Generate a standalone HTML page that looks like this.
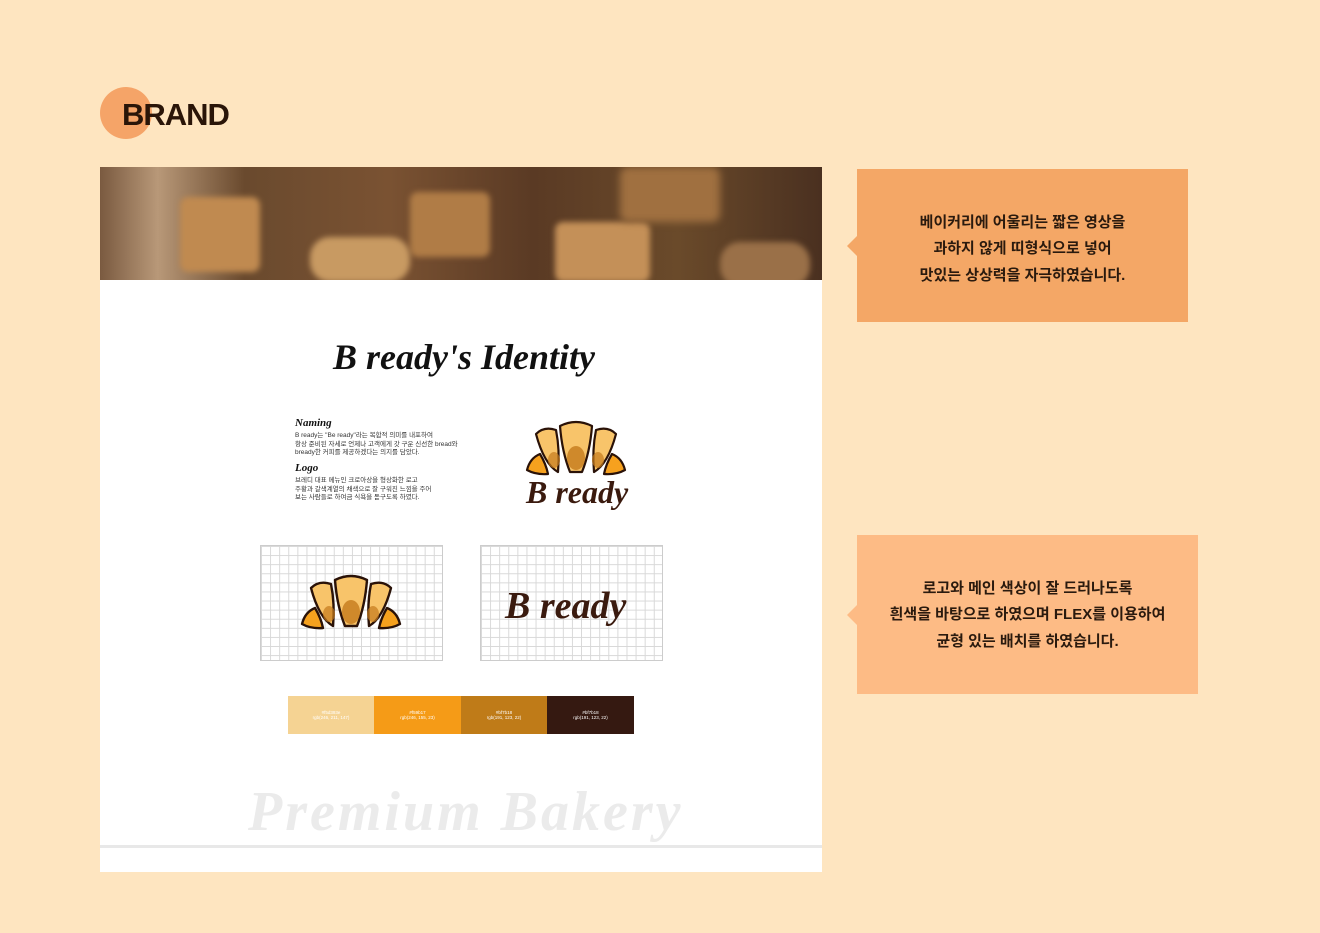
<!DOCTYPE html>
<html><head><meta charset="utf-8"><style>
body{margin:0;width:1320px;height:933px;background:#fee5c0;position:relative;overflow:hidden;font-family:"Liberation Sans","Noto Sans CJK KR",sans-serif}
.abs{position:absolute}
.script{font-family:"Liberation Serif",serif;font-style:italic;font-weight:bold}
.grid{background-color:#fff;background-image:linear-gradient(#d8d8d8 1px,transparent 1px),linear-gradient(90deg,#d8d8d8 1px,transparent 1px);background-size:9.1px 9.1px;border:1px solid #ccc}
.call{display:flex;align-items:center;justify-content:center;text-align:center;color:#2a1a0e;font-size:15px;line-height:26.5px;font-weight:bold;box-sizing:border-box}
.call:before{content:"";position:absolute;left:-10px;top:50%;margin-top:-10px;border:10px solid transparent;border-left:0;border-right-color:inherit}
</style></head><body>
<div class="abs" style="left:100px;top:87px;width:52px;height:52px;border-radius:50%;background:#f5a468"></div>
<div class="abs" style="left:122px;top:97px;font-size:31px;font-weight:bold;color:#2a1508;letter-spacing:-1px">BRAND</div>

<div class="abs" style="left:100px;top:167px;width:722px;height:705px;background:#fff"></div>
<div class="abs" style="left:100px;top:167px;width:722px;height:113px;overflow:hidden;background:linear-gradient(90deg,#7a5a40 0%,#b89878 8%,#6a4a2e 20%,#7a5232 40%,#5a3a24 60%,#6a4a2a 80%,#4a3020 100%)">
<div class="abs" style="left:80px;top:30px;width:80px;height:75px;background:#c08a50;border-radius:8px;filter:blur(3px)"></div>
<div class="abs" style="left:310px;top:25px;width:80px;height:65px;background:#b07c46;border-radius:8px;filter:blur(3px)"></div>
<div class="abs" style="left:455px;top:55px;width:95px;height:60px;background:#c49058;border-radius:8px;filter:blur(3px)"></div>
<div class="abs" style="left:210px;top:70px;width:100px;height:45px;background:#c89a62;border-radius:20px;filter:blur(3px)"></div>
<div class="abs" style="left:520px;top:0px;width:100px;height:55px;background:#a07040;border-radius:8px;filter:blur(4px)"></div>
<div class="abs" style="left:620px;top:75px;width:90px;height:45px;background:#9a7048;border-radius:20px;filter:blur(3px)"></div>
</div>

<div class="abs script" style="left:333px;top:336px;font-size:36px;color:#111">B ready's Identity</div>

<div class="abs script" style="left:295px;top:417px;font-size:11px;color:#111">Naming</div>
<div class="abs" style="left:295px;top:432px;font-size:6.5px;line-height:8.5px;color:#333">B ready는 "Be ready"라는 복합적 의미를 내포하여<br>항상 준비된 자세로 언제나 고객에게 갓 구운 신선한 bread와<br>bready한 커피를 제공하겠다는 의지를 담았다.</div>
<div class="abs script" style="left:295px;top:462px;font-size:11px;color:#111">Logo</div>
<div class="abs" style="left:295px;top:477px;font-size:6.5px;line-height:8.5px;color:#333">브레디 대표 메뉴인 크로아상을 형상화한 로고<br>주황과 갈색계열의 채색으로 잘 구워진 느낌을 주어<br>보는 사람들로 하여금 식욕을 돋구도록 하였다.</div>

<svg class="abs" style="left:524px;top:418px" width="104" height="62" viewBox="0 0 104 62">
<g stroke="#2a1208" stroke-width="2.2" stroke-linejoin="round">
<path d="M3 52 Q6 40 16 36 Q22 46 24 56 Q12 57 3 52Z" fill="#f6a11e"/>
<path d="M101 52 Q98 40 88 36 Q82 46 80 56 Q92 57 101 52Z" fill="#f6a11e"/>
<path d="M12 16 Q20 8 32 12 Q36 32 34 54 Q20 46 12 16Z" fill="#f8c46a"/>
<path d="M92 16 Q84 8 72 12 Q68 32 70 54 Q84 46 92 16Z" fill="#f8c46a"/>
<path d="M36 8 Q52 0 68 8 Q66 34 58 54 L46 54 Q38 34 36 8Z" fill="#f8c46a"/>
</g>
<ellipse cx="52" cy="40" rx="9" ry="12" fill="#c47a1c" opacity=".8"/>
<ellipse cx="30" cy="42" rx="6" ry="8" fill="#c47a1c" opacity=".7"/>
<ellipse cx="74" cy="42" rx="6" ry="8" fill="#c47a1c" opacity=".7"/>
</svg>
<div class="abs script" style="left:526px;top:474px;font-size:32px;color:#3a1a0e">B ready</div>

<div class="abs grid" style="left:260px;top:545px;width:181px;height:114px"></div>
<div class="abs grid" style="left:480px;top:545px;width:181px;height:114px"></div>
<svg class="abs" style="left:298px;top:572px" width="106" height="62" viewBox="0 0 104 62">
<g stroke="#2a1208" stroke-width="2.4" stroke-linejoin="round">
<path d="M3 52 Q6 40 16 36 Q22 46 24 56 Q12 57 3 52Z" fill="#f6a11e"/>
<path d="M101 52 Q98 40 88 36 Q82 46 80 56 Q92 57 101 52Z" fill="#f6a11e"/>
<path d="M12 16 Q20 8 32 12 Q36 32 34 54 Q20 46 12 16Z" fill="#f8c46a"/>
<path d="M92 16 Q84 8 72 12 Q68 32 70 54 Q84 46 92 16Z" fill="#f8c46a"/>
<path d="M36 8 Q52 0 68 8 Q66 34 58 54 L46 54 Q38 34 36 8Z" fill="#f8c46a"/>
</g>
<ellipse cx="52" cy="40" rx="9" ry="12" fill="#c47a1c" opacity=".8"/>
<ellipse cx="30" cy="42" rx="6" ry="8" fill="#c47a1c" opacity=".7"/>
<ellipse cx="74" cy="42" rx="6" ry="8" fill="#c47a1c" opacity=".7"/>
</svg>
<div class="abs script" style="left:505px;top:584px;font-size:38px;color:#3a1a0e">B ready</div>

<div class="abs" style="left:288px;top:696px;display:flex;height:38px;font-size:4.5px;color:#fff;text-align:center">
<div style="width:86px;background:#f5d393;padding-top:14px">#f5d393e<br>rgb(246, 211, 147)</div>
<div style="width:87px;background:#f59b17;padding-top:14px">#f59b17<br>rgb(246, 155, 23)</div>
<div style="width:86px;background:#bf7b18;padding-top:14px">#bf7b18<br>rgb(191, 123, 22)</div>
<div style="width:87px;background:#351911;padding-top:14px">#bf7b18<br>rgb(191, 123, 22)</div>
</div>

<div class="abs script" style="left:248px;top:780px;font-size:56px;color:#ebebeb;letter-spacing:3px">Premium Bakery</div>
<div class="abs" style="left:100px;top:845px;width:722px;height:3px;background:#e8e8e8"></div>

<div class="abs call" style="left:857px;top:169px;width:331px;height:153px;background:#f4a766;border-color:#f4a766;padding-top:8px">베이커리에 어울리는 짧은 영상을<br>과하지 않게 띠형식으로 넣어<br>맛있는 상상력을 자극하였습니다.</div>
<div class="abs call" style="left:857px;top:535px;width:341px;height:159px;background:#fdbb85;border-color:#fdbb85;padding-top:2px">로고와 메인 색상이 잘 드러나도록<br>흰색을 바탕으로 하였으며 FLEX를 이용하여<br>균형 있는 배치를 하였습니다.</div>
</body></html>
